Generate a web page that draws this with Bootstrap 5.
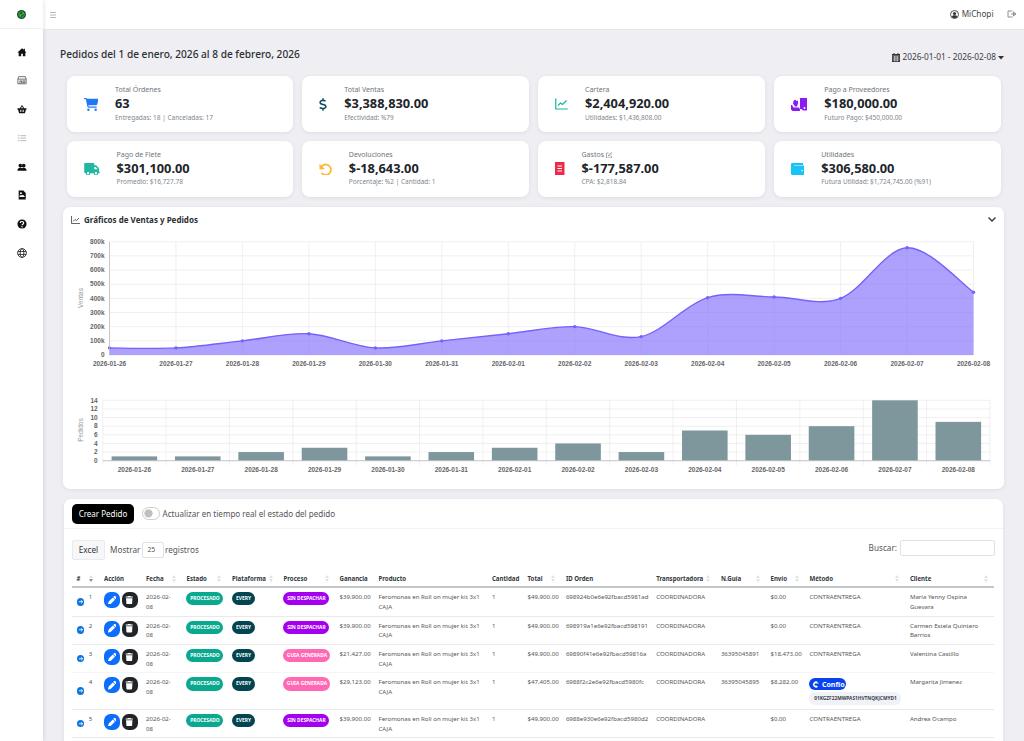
<!DOCTYPE html>
<html lang="es">
<head>
<meta charset="utf-8">
<title>Pedidos</title>
<link href="https://cdn.jsdelivr.net/npm/bootstrap@5.3.0/dist/css/bootstrap.min.css" rel="stylesheet">
<style>
html,body{height:741px;overflow:hidden}
body{font-family:"Noto Sans","Open Sans",sans-serif;background:#eeeef3;color:#212529;font-size:7px}
.shell{height:741px;overflow:hidden}
.side{width:43px;flex:none;background:#fff;box-shadow:1px 0 4px rgba(60,60,90,.13);z-index:3;height:741px}
.side-logo{height:29px;border-bottom:1px solid #f1f1f4}
.side-nav{padding-top:14.5px;gap:12.8px}
.side-nav svg{width:10px;height:16px;display:block}
.wrap{min-width:0;flex:1}
.topb{height:30px;background:#fff;border-bottom:1px solid #e7e7ec;padding:0 7px 0 7px;color:#555}
.topb .who{font-size:8.2px;color:#444;gap:2.5px}
.lgo{margin-left:11px}
.main{padding:0 19px 0 19px}
.headl{height:46px;width:943px}
.ttl{font-size:10.15px;font-weight:500;margin:0;color:#2b2f33;position:relative;top:1px;left:-2px}
.rng{font-size:8.3px;color:#3b3f44;gap:2px;position:relative;top:4.5px;left:-1px}
.krow{--bs-gutter-x:9px;--bs-gutter-y:8.5px;margin-left:0;margin-right:0;width:943px}
.kc{background:#fff;border-radius:8px;height:56.3px;box-shadow:0 1px 4px rgba(40,40,80,.08);padding-left:17px;gap:17px}
.kc svg{flex:none}
.kt{font-size:7px;color:#6c757d;line-height:10px}
.kv{font-size:12.8px;font-weight:700;line-height:17.5px;color:#212529}
.ks{font-size:6.5px;color:#7d8791;line-height:10.5px}
.chartb{width:941px;height:282px;background:#fff;border-radius:7px;margin-top:10px;margin-left:1px;box-shadow:0 1px 4px rgba(40,40,80,.08);overflow:hidden}
.charth{height:25px;padding:0 8px;font-size:8px;font-weight:700;color:#2b2f33;gap:4px}
.chartb svg.plot{display:block}
.plot text{font-family:"Liberation Sans",sans-serif;font-size:6.5px;font-weight:700;fill:#666}
.plot text.yt{font-weight:400;fill:#999;font-size:6.5px}
.tblb{width:939px;margin-top:10px;margin-left:2px;background:#fff;border-radius:7px 7px 0 0;box-shadow:0 1px 4px rgba(40,40,80,.08);height:300px;overflow:hidden}
.tblh{height:30px;padding:0 8px;border-bottom:1px solid #f3f3f5;gap:8px}
.btn-crear{background:#000;color:#fff;font-size:8px;border:0;width:62px;height:20px;border-radius:5px;padding:0;line-height:20px;margin-top:1px}
.rtt{font-size:8.05px;color:#555;gap:2.5px;padding-left:0;min-height:0;margin:0}
.rtt .form-check-input{width:18px;height:12.5px;margin:0;float:none;background-color:#fff;border-color:#ccc}
.tctl{padding:11px 8px 0 8px;height:41px;font-size:8.2px;color:#555}
.bxl{background:#f6f7f9;border:1px solid #e9ebee;width:33px;height:20px;font-size:8.2px;padding:0;color:#333;border-radius:2px;line-height:18px}
.inp{border:1px solid #dee2e6;background:#fff;height:16px;border-radius:2px;font-size:6.8px;line-height:14px;padding-left:4px}
.dt{table-layout:fixed;width:922px;margin:0 0 0 8px;border-collapse:collapse;font-size:6.1px;color:#555}
.dt th{font-size:6.1px;font-weight:700;color:#33383d;padding:0 0 0 4.5px;height:17px;vertical-align:middle;border-bottom:2px solid #c4c6c8;position:relative;white-space:nowrap;overflow:visible}
.dt td{padding:4px 0 4px 4.5px;line-height:9.7px;vertical-align:top;border-bottom:1px solid #e9e9ec}
.dt td:nth-child(4){padding-right:7px}
.dt td:last-child{padding-right:14px}
.dt tr:nth-child(3) td{border-bottom-color:#f5f5f7}
.dt td.ctl{vertical-align:middle;padding-right:0}
.srt::before,.srt::after{content:"";position:absolute;right:6px;width:0;height:0;border-left:2px solid transparent;border-right:2px solid transparent}
.srt::before{top:4.5px;border-bottom:3px solid #dfe1e4}
.srt::after{top:9px;border-top:3px solid #dfe1e4}
.srt.on::after{border-top-color:#8a9097}
.dot{width:7.5px;height:7.5px;border-radius:50%;background:#0d74e0;display:block}
.dot svg{display:block;width:7.5px;height:7.5px}
.acts{gap:1.7px;white-space:nowrap}
.ab{width:16px;height:16px;border-radius:6.5px;border:0;padding:0;flex:none}
.ab svg{width:8.5px;height:8.5px;fill:#fff}
.ab-e{background:#0d6efd}
.ab-d{background:#212529}
.pl{height:13.4px;line-height:13.4px;border-radius:7px;color:#fff;font-size:4.9px;font-weight:700;text-align:center;display:block;white-space:nowrap}
.pl-pro{background:#0aa88f;width:37px}
.pl-ev{background:#024450;width:23px}
.pl-sin{background:#a400f0;width:46px}
.pl-gui{background:#ff69b4;width:47px}
.pl-pen{background:#ffd463;width:37px}
.pl-ev2{background:#6f9aa2;width:23px}
.cf{display:flex;align-items:center;gap:2.5px;background:#0a43ee;color:#fff;font-size:7px;font-weight:700;height:11.5px;width:37px;border-radius:6px;padding-left:3px;line-height:1;margin-top:1px}
.cd{display:block;background:#f1f2f8;color:#3a3f4a;font-size:4.8px;font-weight:700;height:13px;line-height:13px;border-radius:6px;width:92px;text-align:center;margin-top:2px;white-space:nowrap}
</style>
</head>
<body>
<div class="shell d-flex">
  <aside class="side d-flex flex-column">
    <div class="side-logo d-flex align-items-center justify-content-center">
      <svg width="9" height="9" viewBox="0 0 18 18"><circle cx="9" cy="9" r="9" fill="#14532d"/><circle cx="9" cy="9" r="5.5" fill="none" stroke="#37b34a" stroke-width="2"/><path d="M5 9l3 2 5-5" stroke="#8ee04a" stroke-width="2" fill="none"/></svg>
    </div>
    <nav class="side-nav d-flex flex-column align-items-center">
      <svg viewBox="0 0 24 24"><path fill="#111" d="M12 3 1 13h3v9h6v-6h4v6h6v-9h3l-4-3.6V4h-3v2.7z"/></svg>
      <svg viewBox="0 0 24 24"><path fill="none" stroke="#666" stroke-width="2.2" d="M4 4h16l2 6v11H2V10zM2 10h20M7 21v-7h4v7M14 14h5v4h-5z"/></svg>
      <svg viewBox="0 0 24 24"><path fill="#111" d="M1 10h22v3h-1.5L19 22H5L2.500 13H1zM7 10l4-7 2 1-3.500 6zM17 10l-4-7-2 1 3.500 6z"/><path fill="#fff" d="M8 14h1.600v5H8zM11.200 14h1.600v5h-1.600zM14.400 14H16v5h-1.600z"/></svg>
      <svg viewBox="0 0 24 24"><path fill="#c4c8ce" d="M2 5h4v3H2zM2 11h4v3H2zM2 17h4v3H2zM8 5h14v3H8zM8 11h14v3H8zM8 17h14v3H8z"/></svg>
      <svg viewBox="0 0 24 24"><path fill="#111" d="M8 4a4.500 4.500 0 1 1-.01 9zM16 4a4.500 4.500 0 1 1-.01 9zM8 4a4.500 4.500 0 1 0 .01 9zM16 4a4.500 4.500 0 1 0 .01 9zM1 21c0-5 3-7 7-7 2 0 3 .5 4 1 1-.5 2-1 4-1 4 0 7 2 7 7z"/></svg>
      <svg viewBox="0 0 24 24"><path fill="#111" d="M4 1h11l6 6v16H4z"/><circle cx="9.500" cy="8" r="2.400" fill="#fff"/><path fill="#fff" d="M6 13l9-1 4 4v1H6z"/></svg>
      <svg viewBox="0 0 24 24"><circle cx="12" cy="12" r="11" fill="#111"/><path fill="none" stroke="#fff" stroke-width="2.800" d="M8 9.500C8 4.500 16 5 16 9.500c0 3-4 3-4 5.500"/><circle cx="12" cy="18.500" r="1.700" fill="#fff"/></svg>
      <svg viewBox="0 0 24 24"><g fill="none" stroke="#222" stroke-width="2"><circle cx="12" cy="12" r="10.500"/><ellipse cx="12" cy="12" rx="4.500" ry="10.500"/><path d="M2 8.500h20M2 15.500h20"/></g></svg>
    </nav>
  </aside>
  <div class="wrap">
    <header class="topb d-flex align-items-center justify-content-between">
      <svg width="6" height="6" viewBox="0 0 6 6"><path stroke="#b5b8bd" d="M0 .5h6M0 3h6M0 5.500h6"/></svg>
      <div class="who d-flex align-items-center">
        <svg width="9" height="9" viewBox="0 0 18 18"><circle cx="9" cy="9" r="8" fill="none" stroke="#333" stroke-width="1.700"/><circle cx="9" cy="7" r="3.200" fill="#333"/><path fill="#333" d="M3.500 14c1-3 3-3.500 5.500-3.500s4.500.5 5.500 3.500c-3 3-8 3-11 0z"/></svg>
        <span>MiChopi</span>
        <svg class="lgo" width="10" height="8" viewBox="0 0 20 16"><path fill="none" stroke="#777" stroke-width="1.600" d="M11 2H2v12h9M8 8h9M13 4v8l5-4z"/></svg>
      </div>
    </header>
    <main class="main">
      <div class="headl d-flex align-items-center justify-content-between">
        <h1 class="ttl">Pedidos del 1 de enero, 2026 al 8 de febrero, 2026</h1>
        <div class="rng d-flex align-items-center">
          <svg width="8" height="9" viewBox="0 0 16 18"><path fill="#333" d="M3 0h2v2h6V0h2v2h3v16H0V2h3z"/><path stroke="#fff" d="M1 6h14M1 10h14M1 14h14M5 6v11M8 6v11M11 6v11"/></svg>
          <span>2026-01-01 - 2026-02-08</span>
          <svg width="6" height="4" viewBox="0 0 6 4"><path fill="#333" d="M0 0h6L3 3.500z"/></svg>
        </div>
      </div>
      <div class="row krow">
        <div class="col-3"><div class="kc d-flex align-items-center">
          <svg width="14.500" height="13" viewBox="0 0 576 512"><path fill="#1f77f5" d="M0 24C0 10.700 10.700 0 24 0H69.500c22 0 41.500 12.800 50.600 32h411c26.300 0 45.500 25 38.600 50.400l-41 152.300c-8.500 31.400-37 53.300-69.500 53.300H170.700l5.400 28.500c2.200 11.300 12.100 19.500 23.600 19.500H488c13.300 0 24 10.700 24 24s-10.700 24-24 24H199.700c-34.600 0-64.300-24.600-70.700-58.500L77.400 54.500c-.7-3.800-4-6.500-7.900-6.500H24C10.700 48 0 37.300 0 24zM128 464a48 48 0 1 1 96 0 48 48 0 1 1 -96 0zm336-48a48 48 0 1 1 0 96 48 48 0 1 1 0-96z"/></svg>
          <div><div class="kt">Total Órdenes</div><div class="kv">63</div><div class="ks">Entregadas: 18 | Canceladas: 17</div></div>
        </div></div>
        <div class="col-3"><div class="kc d-flex align-items-center">
          <svg width="8" height="13" viewBox="0 0 320 512"><path fill="#12505f" d="M160 0c17.700 0 32 14.300 32 32V67.700c1.600 .2 3.100 .4 4.700 .7c.4 .1 .7 .1 1.100 .2l48 8.800c17.400 3.200 28.900 19.900 25.700 37.200s-19.900 28.900-37.200 25.700l-47.500-8.700c-31.300-4.600-58.900-1.500-78.300 6.200s-27.200 18.300-29 28.100c-2 10.700-.5 16.700 1.200 20.400c1.800 3.900 5.500 8.300 12.800 13.200c16.300 10.700 41.300 17.700 73.700 26.300l2.900 .8c28.600 7.600 63.600 16.800 89.600 33.800c14.200 9.300 27.600 21.900 35.900 39.500c8.500 17.900 10.300 37.900 6.400 59.200c-6.900 38-33.100 63.400-65.600 76.700c-13.700 5.600-28.600 9.200-44.400 11V480c0 17.700-14.300 32-32 32s-32-14.300-32-32V445.100c-.4-.1-.9-.1-1.300-.2l-.2 0 0 0c-24.400-3.800-64.500-14.300-91.500-26.300c-16.100-7.200-23.400-26.100-16.200-42.200s26.100-23.400 42.200-16.200c20.900 9.300 55.300 18.500 75.200 21.600c31.900 4.700 58.200 2 76-5.300c16.900-6.900 24.600-16.900 26.800-28.900c1.900-10.600 .4-16.700-1.300-20.400c-1.900-4-5.600-8.400-13-13.300c-16.400-10.700-41.500-17.700-74-26.300l-2.800-.7 0 0C119.400 279.300 84.400 270 58.400 253c-14.200-9.300-27.500-22-35.800-39.600c-8.400-17.900-10.100-37.900-6.100-59.200C23.700 116 52.300 91.200 84.800 78.300c13.300-5.300 27.900-8.900 43.200-11V32c0-17.700 14.300-32 32-32z"/></svg>
          <div><div class="kt">Total Ventas</div><div class="kv">$3,388,830.00</div><div class="ks">Efectividad: %79</div></div>
        </div></div>
        <div class="col-3"><div class="kc d-flex align-items-center">
          <svg width="13" height="12" viewBox="0 0 26 24"><path fill="none" stroke="#16b5a0" stroke-width="2.400" d="M1.500 1v21h24M6 15l5-5 4 3 8-8"/></svg>
          <div><div class="kt">Cartera</div><div class="kv">$2,404,920.00</div><div class="ks">Utilidades: $1,436,808.00</div></div>
        </div></div>
        <div class="col-3"><div class="kc d-flex align-items-center">
          <svg width="16.500" height="13" viewBox="0 0 33 26"><path fill="#8a1cf0" d="M17 1c0-.5.500-1 1-1h13c1 0 2 1 2 2v20c0 2-1 3-3 3h-6c-1-2-3-3-6-3V1z"/><path fill="#8a1cf0" d="M0 14h2l3 5h11l2 4v3H3l-3-3z"/><path fill="#8a1cf0" d="M5 6l3-3 3 3 3-1v6l-2 6H8L4 11z"/><circle cx="27" cy="20" r="2" fill="#fff"/></svg>
          <div><div class="kt">Pago a Proveedores</div><div class="kv">$180,000.00</div><div class="ks">Futuro Pago: $450,000.00</div></div>
        </div></div>
        <div class="col-3"><div class="kc d-flex align-items-center">
          <svg width="16" height="12.500" viewBox="0 0 640 512"><path fill="#1fb8a3" d="M48 0C21.500 0 0 21.500 0 48V368c0 26.500 21.500 48 48 48H64c0 53 43 96 96 96s96-43 96-96H384c0 53 43 96 96 96s96-43 96-96h32c17.700 0 32-14.300 32-32s-14.300-32-32-32V288 256 237.300c0-17-6.700-33.300-18.700-45.300L512 114.700c-12-12-28.300-18.700-45.300-18.700H416V48c0-26.500-21.500-48-48-48H48zM416 160h50.700L544 237.300V256H416V160zM112 416a48 48 0 1 1 96 0 48 48 0 1 1 -96 0zm368-48a48 48 0 1 1 0 96 48 48 0 1 1 0-96z"/></svg>
          <div><div class="kt">Pago de Flete</div><div class="kv">$301,100.00</div><div class="ks">Promedio: $16,727.78</div></div>
        </div></div>
        <div class="col-3"><div class="kc d-flex align-items-center">
          <svg width="12.600" height="12.600" viewBox="0 0 24 24"><path fill="none" stroke="#ffb52e" stroke-width="3.200" d="M3 10.500A10 10 0 1 1 5 19"/><path fill="#ffb52e" d="M1 1.500v10.500h10.500z"/></svg>
          <div><div class="kt">Devoluciones</div><div class="kv">$-18,643.00</div><div class="ks">Porcentaje: %2 | Cantidad: 1</div></div>
        </div></div>
        <div class="col-3"><div class="kc d-flex align-items-center">
          <svg width="9.500" height="13" viewBox="0 0 19 26"><path fill="#ee2a4c" d="M0 0h19v26H0z"/><path fill="#fff" d="M5 7h9v2H5zM5 12h9v2H5zM5 17h9v2H5z"/></svg>
          <div><div class="kt">Gastos <svg width="6.500" height="6.500" viewBox="0 0 13 13"><path fill="none" stroke="#6c757d" stroke-width="1.200" d="M11 8v4H1V2h4M5 8V6l6-5 1.500 1.500L7 8z"/></svg></div><div class="kv">$-177,587.00</div><div class="ks">CPA: $2,818.84</div></div>
        </div></div>
        <div class="col-3"><div class="kc d-flex align-items-center">
          <svg width="13.500" height="12" viewBox="0 0 27 24"><path fill="#16c4f5" d="M3 0h21v4H6v1h18c2 0 3 1 3 3v13c0 2-1 3-3 3H3c-2 0-3-1-3-3V3c0-2 1-3 3-3z"/><circle cx="22" cy="15" r="1.500" fill="#fff"/></svg>
          <div><div class="kt">Utilidades</div><div class="kv">$306,580.00</div><div class="ks">Futura Utilidad: $1,724,745.00 (%91)</div></div>
        </div></div>
      </div>

      <section class="chartb">
        <div class="charth d-flex align-items-center">
          <svg width="9" height="8" viewBox="0 0 18 16"><path fill="none" stroke="#333" stroke-width="1.500" d="M1 0v15h17M4 11l4-4 3 2 5-5"/></svg>
          <span class="flex-grow-1">Gráficos de Ventas y Pedidos</span>
          <svg width="8" height="5" viewBox="0 0 16 10"><path fill="none" stroke="#333" stroke-width="2.600" d="M1 1l7 7 7-7"/></svg>
        </div>
        <svg class="plot" id="plot" width="941" height="257" viewBox="63 232 941 257"></svg>
      </section>

      <section class="tblb">
        <div class="tblh d-flex align-items-center">
          <button class="btn-crear" type="button">Crear Pedido</button>
          <div class="rtt form-switch d-flex align-items-center"><input class="form-check-input" type="checkbox" role="switch" aria-label="tiempo real"><span>Actualizar en tiempo real el estado del pedido</span></div>
        </div>
        <div class="tctl d-flex justify-content-between align-items-start">
          <div class="d-flex align-items-center" style="gap:5px">
            <button class="bxl" type="button">Excel</button>
            <span>Mostrar</span><span class="inp" style="width:22px;margin-left:-3px">25</span><span style="margin-left:-4.5px">registros</span>
          </div>
          <div class="d-flex align-items-center" style="gap:3px">
            <span>Buscar:</span><span class="inp" style="width:95px"></span>
          </div>
        </div>
        <table class="dt">
          <colgroup><col style="width:12.2px"><col style="width:15.3px"><col style="width:42px"><col style="width:40.5px"><col style="width:45.500px"><col style="width:51.5px"><col style="width:56px"><col style="width:39px"><col style="width:113.4px"><col style="width:35.6px"><col style="width:38.4px"><col style="width:90.3px"><col style="width:64.7px"><col style="width:49.6px"><col style="width:39px"><col style="width:100.4px"><col style="width:88.5px"></colgroup>
          <thead><tr><th>#</th><th class="srt on"></th><th>Acción</th><th class="srt">Fecha</th><th class="srt">Estado</th><th class="srt">Plataforma</th><th class="srt">Proceso</th><th>Ganancia</th><th>Producto</th><th>Cantidad</th><th class="srt">Total</th><th>ID Orden</th><th class="srt">Transportadora</th><th class="srt">N.Guía</th><th class="srt">Envío</th><th class="srt">Método</th><th class="srt">Cliente</th></tr></thead>
          <tbody id="rows">
            <tr><td class="ctl"><span class="dot"><svg viewBox="0 0 14 14"><path stroke="#fff" stroke-width="1.600" fill="none" d="M3.500 7h7M7.500 4L10.500 7l-3 3"/></svg></span></td><td>1</td><td><div class="d-flex acts"><button class="ab ab-e d-flex align-items-center justify-content-center" aria-label="editar"><svg viewBox="0 0 512 512"><path d="M362.700 19.300L314.300 67.700 444.300 197.700l48.400-48.400c25-25 25-65.500 0-90.500L453.300 19.300c-25-25-65.500-25-90.500 0zm-71 71L58.600 323.500c-10.400 10.400-18 23.300-22.200 37.400L1 481.200C-1.500 489.700 .8 498.800 7 505s15.300 8.500 23.700 6.100l120.300-35.400c14.100-4.200 27-11.800 37.400-22.200L421.700 220.300 291.700 90.300z"/></svg></button><button class="ab ab-d d-flex align-items-center justify-content-center" aria-label="borrar"><svg viewBox="0 0 448 512"><path d="M135.200 17.700L128 32H32C14.300 32 0 46.300 0 64S14.300 96 32 96H416c17.700 0 32-14.300 32-32s-14.300-32-32-32H320l-7.200-14.300C307.400 6.800 296.300 0 284.200 0H163.800c-12.100 0-23.200 6.800-28.600 17.700zM416 128H32L53.200 467c1.600 25.300 22.600 45 47.900 45H346.900c25.300 0 46.300-19.700 47.900-45L416 128z"/></svg></button></div></td><td>2026-02-08</td><td><span class="pl pl-pro">PROCESADO</span></td><td><span class="pl pl-ev">EVERY</span></td><td><span class="pl pl-sin">SIN DESPACHAR</span></td><td class="text-nowrap">$39,900.00</td><td>Feromonas en Roll on mujer kit 3x1 CAJA</td><td>1</td><td class="text-nowrap">$49,900.00</td><td class="text-nowrap">698924b0e6e92fbacd5981ad</td><td class="text-nowrap">COORDINADORA</td><td class="text-nowrap"></td><td class="text-nowrap">$0.00</td><td class="text-nowrap">CONTRAENTREGA</td><td>María Yenny Ospina Guevara</td></tr>
            <tr><td class="ctl"><span class="dot"><svg viewBox="0 0 14 14"><path stroke="#fff" stroke-width="1.600" fill="none" d="M3.500 7h7M7.500 4L10.500 7l-3 3"/></svg></span></td><td>2</td><td><div class="d-flex acts"><button class="ab ab-e d-flex align-items-center justify-content-center" aria-label="editar"><svg viewBox="0 0 512 512"><path d="M362.700 19.300L314.300 67.700 444.300 197.700l48.400-48.400c25-25 25-65.500 0-90.500L453.300 19.300c-25-25-65.500-25-90.500 0zm-71 71L58.600 323.500c-10.400 10.400-18 23.300-22.200 37.400L1 481.200C-1.500 489.700 .8 498.800 7 505s15.300 8.500 23.700 6.100l120.300-35.400c14.100-4.200 27-11.800 37.400-22.200L421.700 220.300 291.700 90.300z"/></svg></button><button class="ab ab-d d-flex align-items-center justify-content-center" aria-label="borrar"><svg viewBox="0 0 448 512"><path d="M135.200 17.700L128 32H32C14.300 32 0 46.300 0 64S14.300 96 32 96H416c17.700 0 32-14.300 32-32s-14.300-32-32-32H320l-7.200-14.300C307.400 6.800 296.300 0 284.200 0H163.800c-12.100 0-23.200 6.800-28.600 17.700zM416 128H32L53.200 467c1.600 25.300 22.600 45 47.900 45H346.900c25.300 0 46.300-19.700 47.900-45L416 128z"/></svg></button></div></td><td>2026-02-08</td><td><span class="pl pl-pro">PROCESADO</span></td><td><span class="pl pl-ev">EVERY</span></td><td><span class="pl pl-sin">SIN DESPACHAR</span></td><td class="text-nowrap">$39,900.00</td><td>Feromonas en Roll on mujer kit 3x1 CAJA</td><td>1</td><td class="text-nowrap">$49,900.00</td><td class="text-nowrap">698919a1e6e92fbacd598191</td><td class="text-nowrap">COORDINADORA</td><td class="text-nowrap"></td><td class="text-nowrap">$0.00</td><td class="text-nowrap">CONTRAENTREGA</td><td>Carmen Estela Quintero Barrios</td></tr>
            <tr><td class="ctl"><span class="dot"><svg viewBox="0 0 14 14"><path stroke="#fff" stroke-width="1.600" fill="none" d="M3.500 7h7M7.500 4L10.500 7l-3 3"/></svg></span></td><td>3</td><td><div class="d-flex acts"><button class="ab ab-e d-flex align-items-center justify-content-center" aria-label="editar"><svg viewBox="0 0 512 512"><path d="M362.700 19.300L314.300 67.700 444.300 197.700l48.400-48.400c25-25 25-65.500 0-90.500L453.300 19.300c-25-25-65.500-25-90.500 0zm-71 71L58.600 323.500c-10.400 10.400-18 23.300-22.200 37.400L1 481.200C-1.500 489.700 .8 498.800 7 505s15.300 8.500 23.700 6.100l120.300-35.400c14.100-4.200 27-11.800 37.400-22.200L421.700 220.300 291.700 90.300z"/></svg></button><button class="ab ab-d d-flex align-items-center justify-content-center" aria-label="borrar"><svg viewBox="0 0 448 512"><path d="M135.200 17.700L128 32H32C14.300 32 0 46.300 0 64S14.300 96 32 96H416c17.700 0 32-14.300 32-32s-14.300-32-32-32H320l-7.200-14.300C307.400 6.800 296.300 0 284.200 0H163.800c-12.100 0-23.200 6.800-28.600 17.700zM416 128H32L53.200 467c1.600 25.300 22.600 45 47.900 45H346.900c25.300 0 46.300-19.700 47.900-45L416 128z"/></svg></button></div></td><td>2026-02-08</td><td><span class="pl pl-pro">PROCESADO</span></td><td><span class="pl pl-ev">EVERY</span></td><td><span class="pl pl-gui">GUIA GENERADA</span></td><td class="text-nowrap">$21,427.00</td><td>Feromonas en Roll on mujer kit 3x1 CAJA</td><td>1</td><td class="text-nowrap">$49,900.00</td><td class="text-nowrap">69890f41e6e92fbacd59816a</td><td class="text-nowrap">COORDINADORA</td><td class="text-nowrap">36395045891</td><td class="text-nowrap">$18,473.00</td><td class="text-nowrap">CONTRAENTREGA</td><td>Valentina Castillo</td></tr>
            <tr><td class="ctl"><span class="dot"><svg viewBox="0 0 14 14"><path stroke="#fff" stroke-width="1.600" fill="none" d="M3.500 7h7M7.500 4L10.500 7l-3 3"/></svg></span></td><td>4</td><td><div class="d-flex acts"><button class="ab ab-e d-flex align-items-center justify-content-center" aria-label="editar"><svg viewBox="0 0 512 512"><path d="M362.700 19.300L314.300 67.700 444.300 197.700l48.400-48.400c25-25 25-65.500 0-90.500L453.300 19.300c-25-25-65.500-25-90.500 0zm-71 71L58.600 323.500c-10.400 10.400-18 23.300-22.200 37.400L1 481.200C-1.500 489.700 .8 498.800 7 505s15.300 8.500 23.700 6.100l120.300-35.400c14.100-4.200 27-11.800 37.400-22.200L421.700 220.300 291.700 90.300z"/></svg></button><button class="ab ab-d d-flex align-items-center justify-content-center" aria-label="borrar"><svg viewBox="0 0 448 512"><path d="M135.200 17.700L128 32H32C14.300 32 0 46.300 0 64S14.300 96 32 96H416c17.700 0 32-14.300 32-32s-14.300-32-32-32H320l-7.200-14.300C307.400 6.800 296.300 0 284.200 0H163.800c-12.100 0-23.200 6.800-28.600 17.700zM416 128H32L53.200 467c1.600 25.300 22.600 45 47.900 45H346.900c25.300 0 46.300-19.700 47.900-45L416 128z"/></svg></button></div></td><td>2026-02-08</td><td><span class="pl pl-pro">PROCESADO</span></td><td><span class="pl pl-ev">EVERY</span></td><td><span class="pl pl-gui">GUIA GENERADA</span></td><td class="text-nowrap">$29,123.00</td><td>Feromonas en Roll on mujer kit 3x1 CAJA</td><td>1</td><td class="text-nowrap">$47,405.00</td><td class="text-nowrap">6988f2c2e6e92fbacd5980fc</td><td class="text-nowrap">COORDINADORA</td><td class="text-nowrap">36395045895</td><td class="text-nowrap">$8,282.00</td><td class="text-nowrap"><span class="cf"><svg width="7" height="7" viewBox="0 0 14 14"><path fill="#fff" d="M12 2.500A6 6 0 1 0 12 11.500L9 9A2.500 2.500 0 1 1 9 5z"/><path fill="#5fe07a" d="M9 5l3-2.500c1 1 1.500 2.500 1 4z"/></svg>Confío</span><span class="cd">01KGZF22MWPAS1HVTNQKJCMYD1</span></td><td>Margarita Jimenez</td></tr>
            <tr><td class="ctl"><span class="dot"><svg viewBox="0 0 14 14"><path stroke="#fff" stroke-width="1.600" fill="none" d="M3.500 7h7M7.500 4L10.500 7l-3 3"/></svg></span></td><td>5</td><td><div class="d-flex acts"><button class="ab ab-e d-flex align-items-center justify-content-center" aria-label="editar"><svg viewBox="0 0 512 512"><path d="M362.700 19.300L314.300 67.700 444.300 197.700l48.400-48.400c25-25 25-65.500 0-90.500L453.300 19.300c-25-25-65.500-25-90.500 0zm-71 71L58.600 323.500c-10.400 10.400-18 23.300-22.200 37.400L1 481.200C-1.500 489.700 .8 498.800 7 505s15.300 8.500 23.700 6.100l120.300-35.400c14.100-4.200 27-11.800 37.400-22.200L421.700 220.300 291.700 90.300z"/></svg></button><button class="ab ab-d d-flex align-items-center justify-content-center" aria-label="borrar"><svg viewBox="0 0 448 512"><path d="M135.200 17.700L128 32H32C14.300 32 0 46.300 0 64S14.300 96 32 96H416c17.700 0 32-14.300 32-32s-14.300-32-32-32H320l-7.200-14.300C307.400 6.800 296.300 0 284.200 0H163.800c-12.100 0-23.200 6.800-28.600 17.700zM416 128H32L53.200 467c1.600 25.300 22.600 45 47.900 45H346.900c25.300 0 46.300-19.700 47.900-45L416 128z"/></svg></button></div></td><td>2026-02-08</td><td><span class="pl pl-pro">PROCESADO</span></td><td><span class="pl pl-ev">EVERY</span></td><td><span class="pl pl-sin">SIN DESPACHAR</span></td><td class="text-nowrap">$39,900.00</td><td>Feromonas en Roll on mujer kit 3x1 CAJA</td><td>1</td><td class="text-nowrap">$49,900.00</td><td class="text-nowrap">6988e930e6e92fbacd5980d2</td><td class="text-nowrap">COORDINADORA</td><td class="text-nowrap"></td><td class="text-nowrap">$0.00</td><td class="text-nowrap">CONTRAENTREGA</td><td>Andrea Ocampo</td></tr>
            <tr><td></td><td></td><td><div class="d-flex acts"><button class="ab ab-e" aria-label="editar"></button><button class="ab ab-d" aria-label="borrar"></button></div></td><td></td><td><span class="pl pl-pen"></span></td><td><span class="pl pl-ev2"></span></td><td></td><td></td><td></td><td></td><td></td><td></td><td></td><td></td><td></td><td><span class="cf"></span></td><td></td></tr>
          </tbody>
        </table>
      </section>
    </main>
  </div>
</div>
<script src="https://cdn.jsdelivr.net/npm/bootstrap@5.3.0/dist/js/bootstrap.bundle.min.js"></script>
<script>
(function(){
  var s=document.getElementById('plot'),NS='http://www.w3.org/2000/svg';
  function el(n,a,t){var e=document.createElementNS(NS,n);for(var k in a)e.setAttribute(k,a[k]);if(t!=null)e.textContent=t;s.appendChild(e);return e}
  var dates=['2026-01-26','2026-01-27','2026-01-28','2026-01-29','2026-01-30','2026-01-31','2026-02-01','2026-02-02','2026-02-03','2026-02-04','2026-02-05','2026-02-06','2026-02-07','2026-02-08'];
  var vals=[50,50,100,150,50,100,150,200,130,405,410,400,757,443];
  var x0=109.5,x1=973.5,yT=241.7,yB=355,st=(x1-x0)/13;
  var Y=function(v){return yB-v/800*(yB-yT)},G='#ececef';
  for(var i=0;i<=8;i++){var y=Y(i*100);el('line',{x1:x0,x2:x1,y1:y,y2:y,stroke:G,'stroke-width':.8});el('text',{x:104.5,y:y+2.3,'text-anchor':'end'},i?i*100+'k':'0')}
  var pts=vals.map(function(v,i){return [x0+i*st,Y(v)]});
  pts.forEach(function(p,i){el('line',{x1:p[0],x2:p[0],y1:yT,y2:yB,stroke:G,'stroke-width':.8});el('text',{x:p[0],y:366,'text-anchor':'middle'},dates[i])});
  var d='M'+pts[0][0]+' '+pts[0][1];
  for(i=0;i<13;i++){var a=pts[Math.max(i-1,0)],b=pts[i],c=pts[i+1],e=pts[Math.min(i+2,13)];
    d+='C'+(b[0]+(c[0]-a[0])/6)+' '+(b[1]+(c[1]-a[1])/6)+' '+(c[0]-(e[0]-b[0])/6)+' '+(c[1]-(e[1]-b[1])/6)+' '+c[0]+' '+c[1]}
  el('path',{d:d+'L'+x1+' '+yB+'L'+x0+' '+yB+'Z',fill:'#7a68fb','fill-opacity':.62});
  el('path',{d:d,fill:'none',stroke:'#7462fa','stroke-width':1.4});
  pts.forEach(function(p){el('circle',{cx:p[0],cy:p[1],r:1.7,fill:'#7462fa'})});
  el('line',{x1:x0,x2:x0,y1:yT,y2:yB,stroke:'#bcbcc0','stroke-width':.8});
  el('text',{'class':'yt',x:0,y:0,transform:'translate(83,298) rotate(-90)','text-anchor':'middle'},'Ventas');
  var bx0=102.7,bx1=990,by0=400.3,by1=460.7,bw=(bx1-bx0)/14,bars=[1,1,2,3,1,2,3,4,2,7,6,8,14,9];
  for(i=0;i<=7;i++){y=by1-i*2/14*(by1-by0);el('line',{x1:bx0,x2:bx1,y1:y,y2:y,stroke:G,'stroke-width':.8});el('text',{x:97.7,y:y+2.3,'text-anchor':'end'},i*2)}
  for(i=0;i<=14;i++){var xx=bx0+i*bw;el('line',{x1:xx,x2:xx,y1:by0,y2:by1+4.5,stroke:G,'stroke-width':.8})}
  bars.forEach(function(v,i){var h=v/14*(by1-by0),cx=bx0+(i+.5)*bw;el('rect',{x:cx-22.8,y:by1-h,width:45.6,height:h,fill:'#7d979d'});el('text',{x:cx,y:471.5,'text-anchor':'middle'},dates[i])});
  el('line',{x1:bx0,x2:bx1,y1:by1,y2:by1,stroke:'#bcbcc0','stroke-width':.8});
  el('text',{'class':'yt',x:0,y:0,transform:'translate(83,430) rotate(-90)','text-anchor':'middle'},'Pedidos');
})();
</script>
</body>
</html>
